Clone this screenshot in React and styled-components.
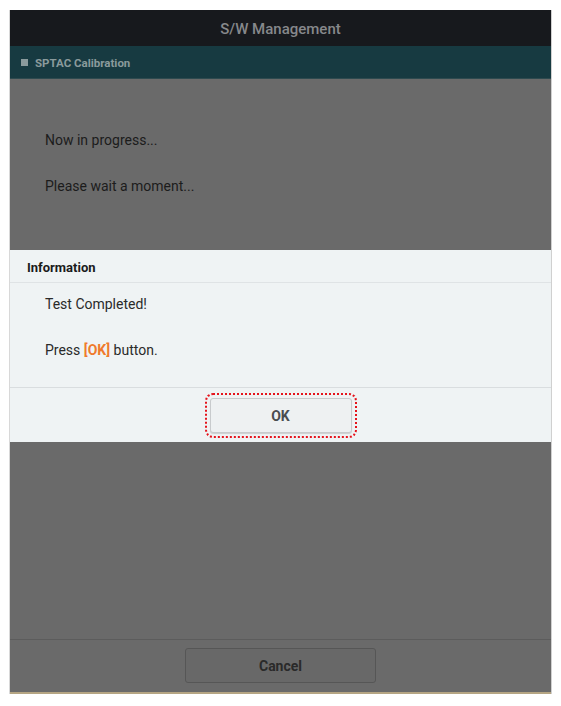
import React from "react";
import styled, { createGlobalStyle } from "styled-components";

const Global = createGlobalStyle`
  html, body { margin: 0; padding: 0; background: #ffffff; }
  body { font-family: Roboto, "Liberation Sans", Arial, sans-serif; }
`;

const Page = styled.div`
  padding: 10px 0 0 10px;
`;

const Frame = styled.div`
  position: relative;
  width: 541px;
  height: 684px;
  display: flex;
  flex-direction: column;
  background: #6a6a6a;
  box-shadow: -1px 0 0 #d8d8d8, 1px 0 0 #d0d0d0;
  border-bottom: 2px solid #b5a583;
  box-sizing: border-box;
`;

const TitleBar = styled.div`
  height: 36px;
  padding-top: 2px;
  box-sizing: border-box;
  background: #17191d;
  display: flex;
  align-items: center;
  justify-content: center;
  color: #86888b;
  font-size: 15px;
  font-weight: 500;
`;

const SubBar = styled.div`
  height: 33px;
  background: #173a41;
  display: flex;
  align-items: center;
  gap: 7px;
  padding-left: 11px;
  padding-top: 1px;
  box-sizing: border-box;
  color: #8a9a9c;
  font-size: 11.5px;
  font-weight: 700;
  border-bottom: 1px solid #2e4a4f;
`;

const Square = styled.span`
  width: 7px;
  height: 7px;
  background: #8a9a9c;
`;

const Body = styled.div`
  flex: 1;
  display: flex;
  flex-direction: column;
  gap: 31px;
  padding: 54px 0 0 35px;
`;

const Line = styled.div`
  font-size: 14px;
  color: ${(p) => p.$color || "#1c1c1c"};
  line-height: 15px;
`;

const Footer = styled.div`
  height: 53px;
  border-top: 1px solid #5c5c5c;
  display: flex;
  justify-content: center;
  padding-top: 8px;
  box-sizing: border-box;
`;

const Button = styled.button`
  width: ${(p) => p.$w}px;
  height: 35px;
  border-radius: 3px;
  font-family: inherit;
  font-size: 14px;
  font-weight: 700;
  cursor: pointer;
  padding-top: 2px;
  background: ${(p) => (p.$dim ? "#686868" : "#eef1f2")};
  color: ${(p) => (p.$dim ? "#2a2a2a" : "#4a4d50")};
  border: 1px solid ${(p) => (p.$dim ? "#565656" : "#c8cbcd")};
  box-shadow: ${(p) => (p.$dim ? "none" : "0 1px 1px rgba(0,0,0,0.15)")};
  ${(p) => p.$focus && "outline: 2px dotted #e5141c; outline-offset: 3px;"}
`;

const Dialog = styled.div`
  position: absolute;
  top: 240px;
  left: 0;
  right: 0;
  background: #eff3f4;
  display: flex;
  flex-direction: column;
`;

const DialogHead = styled.div`
  height: 33px;
  display: flex;
  align-items: center;
  padding: 3px 0 0 17px;
  font-size: 13px;
  font-weight: 700;
  color: #1a1a1a;
  border-bottom: 1px solid #dfe3e5;
  box-sizing: border-box;
`;

const DialogBody = styled.div`
  height: 105px;
  display: flex;
  flex-direction: column;
  gap: 31px;
  padding: 14px 0 0 35px;
  box-sizing: border-box;
  border-bottom: 1px solid #d9dddf;
`;

const Accent = styled.span`
  color: #ef7a2c;
  font-weight: 700;
`;

const DialogFoot = styled.div`
  height: 54px;
  display: flex;
  justify-content: center;
  padding-top: 10px;
  box-sizing: border-box;
`;

export default function App() {
  return (
    <Page>
      <Global />
      <Frame>
        <TitleBar>S/W Management</TitleBar>
        <SubBar>
          <Square />
          SPTAC Calibration
        </SubBar>
        <Body>
          <Line>Now in progress...</Line>
          <Line>Please wait a moment...</Line>
        </Body>
        <Footer>
          <Button $dim $w={191}>Cancel</Button>
        </Footer>
        <Dialog>
          <DialogHead>Information</DialogHead>
          <DialogBody>
            <Line $color="#2a2a2a">Test Completed!</Line>
            <Line $color="#2a2a2a">
              Press <Accent>[OK]</Accent> button.
            </Line>
          </DialogBody>
          <DialogFoot>
            <Button $focus $w={142}>OK</Button>
          </DialogFoot>
        </Dialog>
      </Frame>
    </Page>
  );
}
